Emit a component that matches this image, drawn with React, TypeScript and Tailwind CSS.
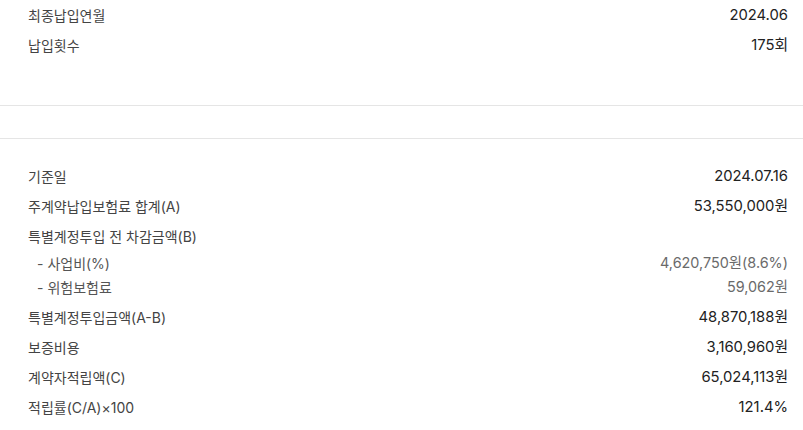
type Row = { label: string; value: string; sub?: boolean };

const top: Row[] = [
  { label: "최종납입연월", value: "2024.06" },
  { label: "납입횟수", value: "175회" },
];

const detail: Row[] = [
  { label: "기준일", value: "2024.07.16" },
  { label: "주계약납입보험료 합계(A)", value: "53,550,000원" },
  { label: "특별계정투입 전 차감금액(B)", value: "" },
  { label: "- 사업비(%)", value: "4,620,750원(8.6%)", sub: true },
  { label: "- 위험보험료", value: "59,062원", sub: true },
  { label: "특별계정투입금액(A-B)", value: "48,870,188원" },
  { label: "보증비용", value: "3,160,960원" },
  { label: "계약자적립액(C)", value: "65,024,113원" },
  { label: "적립률(C/A)×100", value: "121.4%" },
];

const InfoRow = ({ row, after }: { row: Row; after?: boolean }) =>
  row.sub ? (
    <div className="flex h-[24px] items-center justify-between">
      <span className="pl-[9px] text-[14px] text-[#555]">{row.label}</span>
      <span className="text-[14.4px] text-[#6a6a6a]">{row.value}</span>
    </div>
  ) : (
    <div className={`flex h-[30px] items-center justify-between ${after ? "mt-[3px]" : ""}`}>
      <span className="text-[14px] text-[#444]">{row.label}</span>
      <span className="text-[14.8px] text-[#222]">{row.value}</span>
    </div>
  );

export default function App() {
  return (
    <div
      className="w-[803px] bg-white"
      style={{ fontFamily: 'Inter, "Noto Sans CJK KR", sans-serif' }}
    >
      {/* 납입 정보 */}
      <div className="pl-[28px] pr-[15px] pb-[45px]">
        {top.map((r) => (
          <InfoRow key={r.label} row={r} />
        ))}
      </div>

      {/* 구분 영역 */}
      <div className="h-[34px] border-y border-[#e5e5e5]" />

      {/* 적립금 정보 */}
      <div className="pl-[28px] pr-[15px] pt-[22px]">
        {detail.map((r, i) => (
          <InfoRow key={r.label} row={r} after={i > 0 && detail[i - 1].sub && !r.sub} />
        ))}
      </div>
    </div>
  );
}
